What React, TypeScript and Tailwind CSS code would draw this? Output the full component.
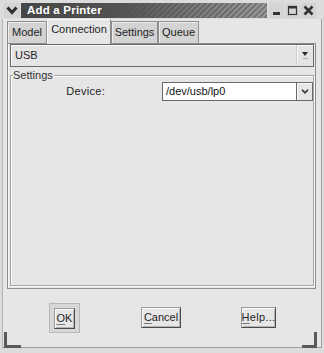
import React from "react";

function TitleBtn({ children }: { children: React.ReactNode }) {
  return (
    <div className="w-[15px] h-[15px] bg-[#d4d4d4] flex items-center justify-center">
      {children}
    </div>
  );
}

function Tab({ label, w, active }: { label: string; w: string; active?: boolean }) {
  if (active) {
    return (
      <div
        className={`${w} h-[25px] -mb-px relative z-10 bg-[#e6e6e6] border-t border-l border-r border-t-[#fafafa] border-l-[#fafafa] border-r-[#8a8a8a] flex items-start justify-center pt-[3px] leading-[13px]`}
      >
        {label}
      </div>
    );
  }
  return (
    <div
      className={`${w} h-[22px] bg-[#d3d3d3] border-t border-l border-r border-[#8e8e8e] shadow-[inset_1px_1px_0_#ececec] flex items-start justify-center pt-[4px] leading-[13px]`}
    >
      {label}
    </div>
  );
}

function Btn({ w, children }: { w: string; children: React.ReactNode }) {
  return (
    <div
      className={`${w} h-[21px] bg-[#e6e6e6] border border-t-[#9a9a9a] border-l-[#9a9a9a] border-r-[#4a4a4a] border-b-[#4a4a4a] shadow-[inset_1px_1px_0_#fafafa,inset_-1px_-1px_0_#b4b4b4] flex items-center justify-center leading-[13px]`}
    >
      {children}
    </div>
  );
}

function U({ children }: { children: React.ReactNode }) {
  return <span className="underline decoration-[#7a7a7a] underline-offset-[2px]">{children}</span>;
}

export default function App() {
  return (
    <div className="relative w-[324px] h-[353px] bg-[#dcdcdc] font-['Liberation_Sans',Arial,sans-serif] text-[11px] text-[#1e1e1e] overflow-hidden">
      {/* title row */}
      <div className="flex h-[19px] pt-[3px] pl-[4px]">
        <div className="w-[16px] h-[15px] bg-[#d4d4d4] flex items-center justify-center">
          <svg width="12" height="9" viewBox="0 0 12 9">
            <path d="M1.5 1.5 L6 6.5 L10.5 1.5" fill="none" stroke="#2e2e2e" strokeWidth="3" />
          </svg>
        </div>
        <div className="relative ml-[1px] w-[246px] h-[15px] bg-gradient-to-r from-[#474747] via-[#555555] to-[#777777] overflow-hidden">
          <svg className="absolute inset-0" width="246" height="15">
            <defs>
              <pattern id="hatch" width="4" height="4" patternUnits="userSpaceOnUse" patternTransform="rotate(45)">
                <rect width="1.6" height="4" fill="#a8a8a8" />
              </pattern>
              <linearGradient id="fade" x1="0" x2="1" y1="0" y2="0">
                <stop offset="0.4" stopColor="#fff" stopOpacity="0" />
                <stop offset="1" stopColor="#fff" stopOpacity="0.9" />
              </linearGradient>
              <mask id="m">
                <rect width="246" height="15" fill="url(#fade)" />
              </mask>
            </defs>
            <rect width="246" height="15" fill="url(#hatch)" mask="url(#m)" />
          </svg>
          <span className="relative block pl-[6px] text-white font-bold text-[11.5px] leading-[15px] tracking-[0.2px]">
            Add a Printer
          </span>
        </div>
        <div className="flex gap-[1px] ml-[2px]">
          <TitleBtn>
            <svg width="11" height="11" viewBox="0 0 11 11">
              <rect x="2" y="7" width="7" height="3" fill="#333" />
            </svg>
          </TitleBtn>
          <TitleBtn>
            <svg width="11" height="11" viewBox="0 0 11 11">
              <rect x="1.5" y="1.5" width="8" height="8" fill="none" stroke="#333" strokeWidth="1.2" />
              <rect x="1" y="1" width="9" height="2.5" fill="#333" />
            </svg>
          </TitleBtn>
          <TitleBtn>
            <svg width="11" height="11" viewBox="0 0 11 11">
              <path d="M1.5 1.5 L9.5 9.5 M9.5 1.5 L1.5 9.5" stroke="#333" strokeWidth="2.6" />
            </svg>
          </TitleBtn>
        </div>
      </div>

      {/* window client */}
      <div className="ml-[2px] w-[320px] h-[329px] bg-[#e6e6e6] border-l border-r border-b border-l-[#b4b4b4] border-r-[#a0a0a0] border-b-[#a0a0a0] pl-[4px] pr-[5px] flex flex-col">
        {/* tabs */}
        <div className="flex items-end h-[24px]">
          <Tab label="Model" w="w-[40px]" />
          <Tab label="Connection" w="w-[64px]" active />
          <Tab label="Settings" w="w-[47px]" />
          <Tab label="Queue" w="w-[41px]" />
        </div>
        {/* panel */}
        <div className="h-[246px] border border-t-[#8e8e8e] border-l-[#8e8e8e] border-r-[#8e8e8e] border-b-[#8e8e8e] shadow-[inset_1px_1px_0_#f8f8f8] flex flex-col pl-[2px] pr-[1px] pb-[2px]">
          {/* combo */}
          <div className="mt-[0px] h-[23px] border border-[#6a6a6a] shadow-[inset_1px_1px_0_#fafafa] bg-[#e4e4e4] flex">
            <div className="flex-1 pl-[4px] flex items-center leading-[13px]">USB</div>
            <div className="w-[17px] border-l border-l-[#d0d0d0] shadow-[inset_1px_0_0_#f4f4f4] flex flex-col items-center justify-center gap-[2px]">
              <svg width="6" height="4" viewBox="0 0 6 4">
                <path d="M0 0 L6 0 L3 4 Z" fill="#2a2a2a" />
              </svg>
              <div className="w-[5px] h-[1px] bg-[#b0b0b0]" />
            </div>
          </div>
          {/* group box */}
          <div className="relative mt-[8px] flex-1 border border-[#a6a6a6] shadow-[inset_1px_1px_0_#fbfbfb,1px_1px_0_#fbfbfb] pt-[6px]">
            <div className="absolute left-[2px] top-[-7px] bg-[#e6e6e6] pr-[1px] leading-[13px] text-[#333]">
              Settings
            </div>
            <div className="flex items-center h-[19px]">
              <div className="w-[94px] text-right leading-[13px] tracking-[0.3px]">Device:</div>
              <div className="ml-[57px] w-[135px] h-[19px] bg-white border border-[#6a6a6a] flex items-center pl-[3px] leading-[13px] text-[#111]">
                /dev/usb/lp0
              </div>
              <div className="w-[16px] h-[19px] bg-[#e6e6e6] border border-l-0 border-[#6a6a6a] shadow-[inset_1px_1px_0_#fafafa] flex items-center justify-center">
                <svg width="8" height="5" viewBox="0 0 8 5">
                  <path d="M1 0.8 L4 3.8 L7 0.8" fill="none" stroke="#333" strokeWidth="1.6" />
                </svg>
              </div>
            </div>
          </div>
        </div>
        {/* buttons */}
        <div className="flex items-start pt-[14px] pl-[42px]">
          <div className="w-[31px] h-[30px] bg-[#d8d8d8] border border-[#b8b8b8] flex items-center justify-center">
            <Btn w="w-[21px]">
              <span><U>O</U>K</span>
            </Btn>
          </div>
          <div className="ml-[61px] mt-[4px]">
            <Btn w="w-[40px]">
              <span><U>C</U>ancel</span>
            </Btn>
          </div>
          <div className="ml-[60px] mt-[4px]">
            <Btn w="w-[35px]">
              <span className="tracking-[0.3px]"><U>H</U>elp...</span>
            </Btn>
          </div>
        </div>
      </div>

      {/* resize corner handles */}
      <div className="absolute left-[4px] top-[332px] w-[3px] h-[16px] bg-[#5a5a5a]" />
      <div className="absolute left-[4px] top-[345px] w-[17px] h-[3px] bg-[#5a5a5a]" />
      <div className="absolute left-[314px] top-[332px] w-[3px] h-[16px] bg-[#5a5a5a]" />
      <div className="absolute left-[302px] top-[345px] w-[15px] h-[3px] bg-[#5a5a5a]" />
    </div>
  );
}
